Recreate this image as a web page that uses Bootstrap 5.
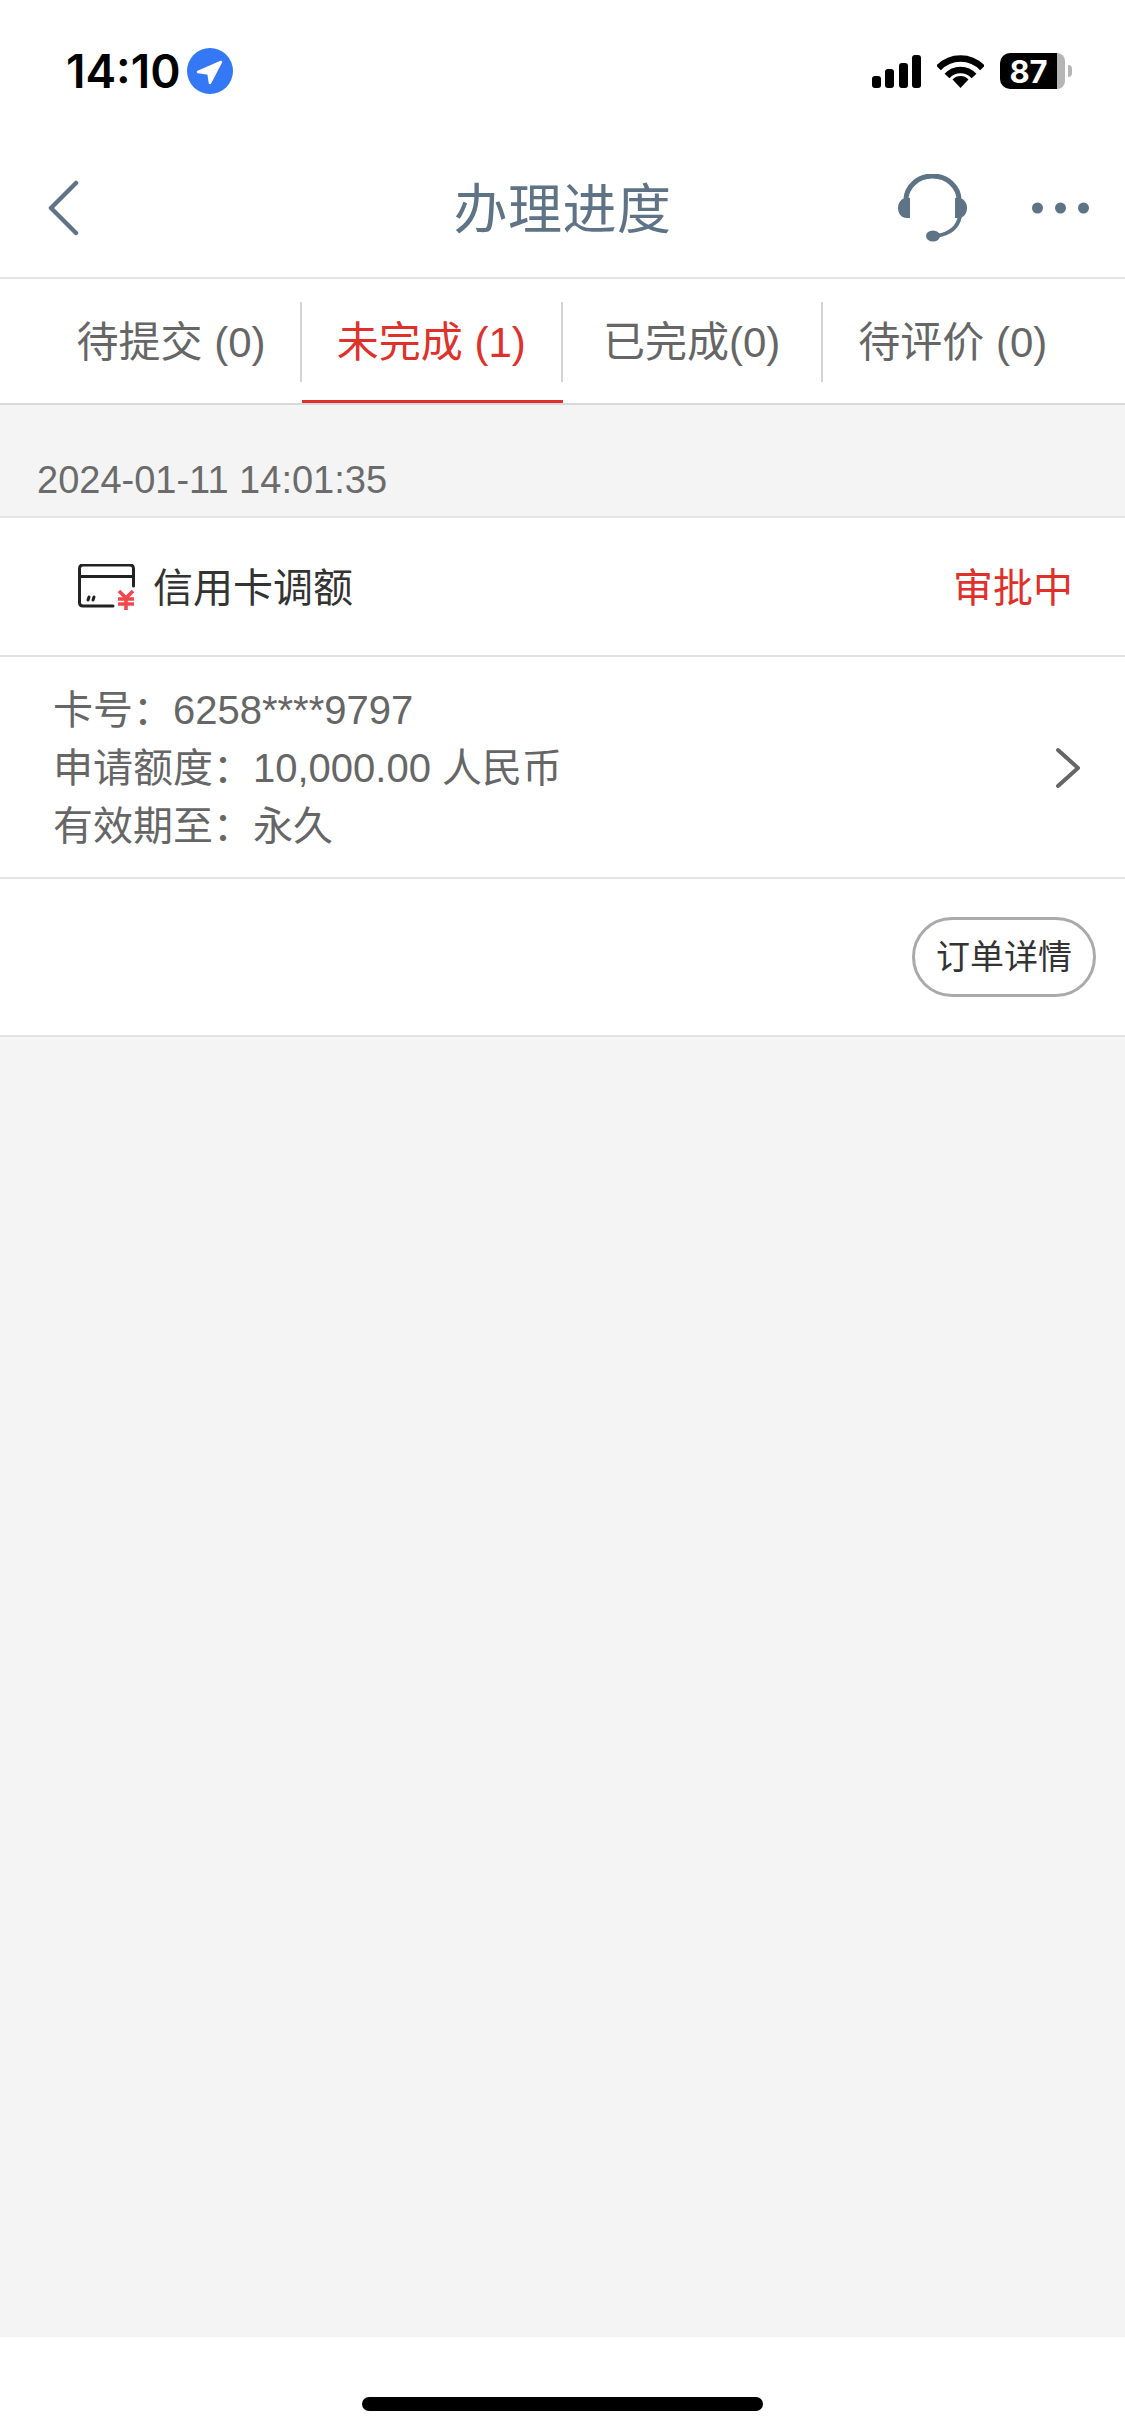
<!DOCTYPE html>
<html lang="zh-CN">
<head>
    <meta charset="UTF-8">
    <title>办理进度</title>
    <link href="https://cdn.jsdelivr.net/npm/bootstrap@5.3.0/dist/css/bootstrap.min.css" rel="stylesheet">
    <style>
        body { font-family: "Liberation Sans", "Noto Sans CJK SC", sans-serif; background: #f4f4f4; color: #666; }
        .status-bar { height: 110px; padding: 32px 53px 0 66px; }
        .status-time { font-family: Inter, "Liberation Sans", sans-serif; font-weight: 600; font-size: 46px; line-height: 1; color: #000; margin-right: 6px; }
        .batt-fill { width: 57px; height: 36px; background: #000; color: #fff; border-radius: 10px 0 0 10px; font-family: Inter, "Liberation Sans", sans-serif; font-weight: 700; font-size: 31px; line-height: 1; }
        .batt-rest { width: 8px; height: 36px; background: #b5b5b5; border-radius: 0 10px 10px 0; }
        .batt-nub { width: 4px; height: 12px; background: #b5b5b5; border-radius: 0 6px 6px 0; margin-left: 3px; }
        .nav-bar { height: 169px; padding: 28px 36px 0; border-bottom: 2px solid #e3e3e3; }
        .nav-side { flex: 1 1 0; }
        .nav-back { margin-left: 12px; }
        .nav-title { font-size: 54px; line-height: 1; color: #5f7386; letter-spacing: 0.5px; margin-top: 5px; }
        .nav-more { margin-left: 64px; }
        .tab-row { padding: 0 42px; border-bottom: 2px solid #d9d9d9; }
        .tab-item { flex: 1 1 0; padding: 23px 0 18px; border-bottom: 3px solid transparent; }
        .tab-label { height: 80px; font-size: 42px; line-height: 1; color: #666; border-right: 2px solid #d4d4d4; padding-top: 1px; }
        .tab-item:last-child .tab-label { border-right: 0; }
        .tab-on { border-bottom-color: #e0302a; }
        .tab-on .tab-label { color: #e0302a; }
        .date-row { height: 113px; padding: 0 0 7px 37px; font-size: 38px; line-height: 1.5; color: #6b6b6b; border-bottom: 2px solid #e3e3e3; }
        .order-head { height: 139px; padding: 2px 52px 0 78px; border-bottom: 2px solid #e3e3e3; }
        .order-name { font-size: 40px; line-height: 1; color: #333; margin-left: 17px; }
        .order-state { font-size: 40px; line-height: 1; color: #e0302a; }
        .order-body { height: 222px; padding: 2px 44px 0 53px; font-size: 40px; line-height: 58px; color: #666; border-bottom: 2px solid #e3e3e3; }
        .order-foot { height: 158px; padding: 0 29px 0 0; border-bottom: 2px solid #e3e3e3; }
        .detail-btn { width: 184px; height: 80px; padding: 0; border: 3px solid #aaa; font-size: 34px; line-height: 1; color: #333; background: #fff; }
        .page-fill { flex: 1 1 auto; }
        .home-area { height: 98px; padding-top: 60px; }
        .home-bar { width: 401px; height: 14px; background: #000; border-radius: 7px; }
    </style>
</head>
<body class="d-flex flex-column min-vh-100">

    <!-- 状态栏 -->
    <div class="status-bar bg-white d-flex align-items-center justify-content-between">
        <div class="d-flex align-items-center">
            <span class="status-time">14:10</span>
            <svg width="46" height="46" viewBox="0 0 46 46"><circle cx="23" cy="23" r="23" fill="#3478f6"/><path d="M11 24 L34 14 L23 35 L21.5 25.5 Z" fill="#fff" stroke="#fff" stroke-width="2.5" stroke-linejoin="round"/></svg>
        </div>
        <div class="d-flex align-items-center">
            <svg width="49" height="33" viewBox="0 0 49 33" fill="#000">
                <rect x="0" y="21" width="9" height="12" rx="3"/>
                <rect x="13" y="14" width="9" height="19" rx="3"/>
                <rect x="27" y="8" width="9" height="25" rx="3"/>
                <rect x="40" y="0" width="9" height="33" rx="3"/>
            </svg>
            <svg class="ms-3" width="47" height="34" viewBox="0 0 47 34" fill="none" stroke="#000" stroke-width="6.5">
                <path d="M1.5 14 A30 30 0 0 1 45.5 14"/>
                <path d="M10 22 A18 18 0 0 1 37 22"/>
                <path d="M23.5 34 L15.5 25.5 A11 11 0 0 1 31.5 25.5 Z" fill="#000" stroke="none"/>
            </svg>
            <div class="d-flex align-items-center ms-3">
                <span class="batt-fill d-flex align-items-center justify-content-center">87</span>
                <span class="batt-rest"></span>
                <span class="batt-nub"></span>
            </div>
        </div>
    </div>

    <!-- 标题栏 -->
    <div class="nav-bar bg-white d-flex align-items-center">
        <div class="nav-side">
            <svg class="nav-back d-block" width="32" height="56" viewBox="0 0 32 56" fill="none" stroke="#5f7386" stroke-width="4.5" stroke-linecap="round" stroke-linejoin="round"><path d="M28 3 L3 28 L28 53"/></svg>
        </div>
        <div class="nav-title">办理进度</div>
        <div class="nav-side d-flex align-items-center justify-content-end">
            <svg width="70" height="68" viewBox="0 0 70 68" fill="#5f7386">
                <path d="M8 26 A26.5 24 0 0 1 61 26" fill="none" stroke="#5f7386" stroke-width="5"/>
                <path d="M12 24 V44 H9 C3 44 0 39 0 34 C0 29 3 24 9 24 Z"/>
                <path d="M57 24 V44 H60 C66 44 69 39 69 34 C69 29 66 24 60 24 Z"/>
                <path d="M62 42 C60 53 52 60 38 62" fill="none" stroke="#5f7386" stroke-width="4"/>
                <ellipse cx="35" cy="62" rx="7" ry="5.5"/>
            </svg>
            <svg class="nav-more" width="57" height="12" viewBox="0 0 57 12" fill="#5f7386">
                <circle cx="5.5" cy="6" r="5.5"/><circle cx="28.5" cy="6" r="5.5"/><circle cx="51.5" cy="6" r="5.5"/>
            </svg>
        </div>
    </div>

    <!-- 分类标签 -->
    <div class="tab-row bg-white d-flex">
        <div class="tab-item"><div class="tab-label d-flex align-items-center justify-content-center">待提交 (0)</div></div>
        <div class="tab-item tab-on"><div class="tab-label d-flex align-items-center justify-content-center">未完成 (1)</div></div>
        <div class="tab-item"><div class="tab-label d-flex align-items-center justify-content-center">已完成(0)</div></div>
        <div class="tab-item"><div class="tab-label d-flex align-items-center justify-content-center">待评价 (0)</div></div>
    </div>

    <div class="date-row d-flex align-items-end">2024-01-11 14:01:35</div>

    <div class="order-head bg-white d-flex align-items-center justify-content-between">
        <div class="d-flex align-items-center">
            <svg width="58" height="47" viewBox="0 0 58 47" fill="none">
                <path d="M35 42 H5 Q1.5 42 1.5 38.5 V4.5 Q1.5 1 5 1 H52 Q55.5 1 55.5 4.5 V22 M1.5 12.5 H55.5" stroke="#222" stroke-width="3" stroke-linecap="round"/>
                <path d="M11 33 L10 36 M16 33 L15 36" stroke="#222" stroke-width="3" stroke-linecap="round"/>
                <path d="M41 27 L48 34 L55 27 M40 35 H56 M40 40 H56 M48 34 V46" stroke="#f0484e" stroke-width="3.6"/>
            </svg>
            <span class="order-name">信用卡调额</span>
        </div>
        <span class="order-state">审批中</span>
    </div>

    <div class="order-body bg-white d-flex align-items-center justify-content-between">
        <div>
            <div>卡号：6258****9797</div>
            <div>申请额度：10,000.00 人民币</div>
            <div>有效期至：永久</div>
        </div>
        <svg width="26" height="42" viewBox="0 0 26 42" fill="none" stroke="#666" stroke-width="4" stroke-linecap="round" stroke-linejoin="round"><path d="M3 3 L23 21 L3 39"/></svg>
    </div>

    <div class="order-foot bg-white d-flex align-items-center justify-content-end">
        <button type="button" class="btn detail-btn rounded-pill">订单详情</button>
    </div>

    <div class="page-fill"></div>

    <div class="home-area bg-white d-flex justify-content-center">
        <div class="home-bar"></div>
    </div>

</body>
</html>
